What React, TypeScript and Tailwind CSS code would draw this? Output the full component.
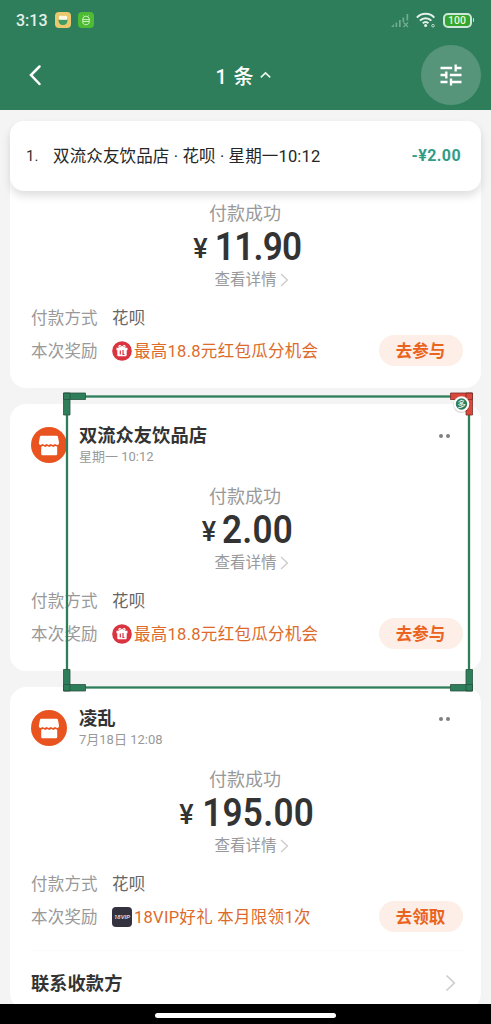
import type { ReactNode } from "react";
import clsx from "clsx";

interface Reward {
  icon: "gift" | "vip";
  text: string;
  action: string;
}

interface Payment {
  id: string;
  merchant?: string;
  time?: string;
  amount: string;
  method: string;
  reward: Reward;
}

const PAYMENTS: Payment[] = [
  {
    id: "p1",
    amount: "11.90",
    method: "花呗",
    reward: { icon: "gift", text: "最高18.8元红包瓜分机会", action: "去参与" },
  },
  {
    id: "p2",
    merchant: "双流众友饮品店",
    time: "星期一 10:12",
    amount: "2.00",
    method: "花呗",
    reward: { icon: "gift", text: "最高18.8元红包瓜分机会", action: "去参与" },
  },
  {
    id: "p3",
    merchant: "凌乱",
    time: "7月18日 12:08",
    amount: "195.00",
    method: "花呗",
    reward: { icon: "vip", text: "18VIP好礼 本月限领1次", action: "去领取" },
  },
];

function StatusBar() {
  return (
    <div className="flex h-10 items-center justify-between pl-4 pr-[17px]">
      <div className="flex items-center">
        <span className="w-[39px] pt-[2px] text-[16px] font-medium leading-5 text-[#e4f1ea]">3:13</span>
        <svg className="h-4 w-4" viewBox="0 0 16 16" aria-hidden>
          <rect width="16" height="16" rx="4" fill="#e9c96c" />
          <path d="M3.500 7.500h9c0 3.400-1.300 5.500-4.500 5.500S3.500 10.900 3.500 7.500z" fill="#3f9a63" />
          <path d="M4 4.500l1.600-.9 1.300.6L8 3.500l1.300.7 1.300-.6 1.400.9v3.300H4z" fill="#fff8ea" />
        </svg>
        <svg className="ml-[7px] h-4 w-4" viewBox="0 0 16 16" aria-hidden>
          <rect width="16" height="16" rx="4" fill="#4dbb33" />
          <g fill="none" stroke="#d5f5c8" strokeWidth="0.900">
            <path d="M4.800 7.500c0-4.400 6.400-4.400 6.400 0M5.500 3.500l.8 1.200M10.500 3.500l-.8 1.200M4 7.600h8M4.800 9.500h6.400M4.800 8v2c0 3.700 6.400 3.700 6.400 0V8" />
          </g>
        </svg>
      </div>
      <div className="flex items-center">
        <svg className="h-[15px] w-[20px]" viewBox="0 0 20 15" aria-hidden>
          <g fill="#73ab90">
            <path d="M1 14l3-3v3zM5.500 9.500h1.700V14H5.500zM9 7h1.700v7H9zM12.500 4.500h1.700V9h-1.700zM16.500 1h1.700v6.500h-1.700z" />
          </g>
          <path d="M13.500 9.500l4.500 4.500M18 9.500L13.500 14" stroke="#73ab90" strokeWidth="1.400" />
        </svg>
        <svg className="ml-[6px] h-[16px] w-[21px]" viewBox="0 0 21 16" aria-hidden>
          <g fill="none" stroke="#e4f1ea" strokeWidth="2">
            <path d="M.9 5.600c4.700-5 12.800-5 17.400 0M3.900 8.600c3.100-3.300 8.400-3.300 11.400 0M6.800 11.300c1.700-1.700 4-1.700 5.600 0" />
          </g>
          <circle cx="9.600" cy="13.500" r="1.500" fill="#e4f1ea" />
          <circle cx="17" cy="13.700" r="1.300" fill="none" stroke="#bcdccb" />
        </svg>
        <div className="ml-[6px] flex items-center">
          <div className="flex h-[15px] w-[29px] items-center justify-center rounded-[5px] border-2 border-[#cfe6da] bg-[#34a52d]">
            <span className="pt-[2px] text-[10.500px] font-medium leading-none text-[#e6f8dc]">100</span>
          </div>
          <div className="ml-px h-1 w-[1.500px] rounded-r bg-[#cfe6da]" />
        </div>
      </div>
    </div>
  );
}

function TopBar() {
  return (
    <header className="h-[110px] shrink-0 bg-[#2f7e5b]">
      <StatusBar />
      <div className="flex h-[70px] items-center justify-between pl-[28px] pr-[10px]">
        <svg className="h-6 w-[44px]" viewBox="0 0 44 24" aria-hidden>
          <path d="M11.500 3.500L3 12l8.500 9" fill="none" stroke="#fff" strokeWidth="2.500" strokeLinecap="round" />
        </svg>
        <div className="mr-[7px] flex items-center text-white">
          <span className="pt-[3px] text-[20px] font-medium leading-6 tracking-[0.900px]">1 条</span>
          <svg className="ml-[5px] h-2 w-[11px]" viewBox="0 0 11 8" aria-hidden>
            <path d="M.8 6.300l4.700-4.500 4.700 4.500" fill="none" stroke="#eaf5ef" strokeWidth="1.600" />
          </svg>
        </div>
        <button type="button" className="flex h-[60px] w-[60px] items-center justify-center rounded-full bg-[#57957a]">
          <svg className="h-[28px] w-[28px]" viewBox="0 0 24 24" fill="#fff" aria-hidden>
            <path d="M3 17v2h6v-2H3zM3 5v2h10V5H3zm10 16v-2h8v-2h-8v-2h-2v6h2zM7 9v2H3v2h4v2h2V9H7zm14 4v-2H11v2h10zm-6-4h2V7h4V5h-4V3h-2v6z" />
          </svg>
        </button>
      </div>
    </header>
  );
}

function ResultSheet() {
  return (
    <div className="absolute left-[10px] right-[10px] top-[121px] z-20 flex h-[70px] items-center rounded-[14px] bg-white pl-[16px] pr-[20px] text-[16.500px] shadow-[0_5px_9px_rgba(0,0,0,0.13)]">
      <span className="w-[27px] text-[15px] text-[#333]">1.</span>
      <span className="flex-1 whitespace-nowrap pt-[3px] tracking-[0.140px] text-[#262626]">
        双流众友饮品店 · 花呗 · 星期一10:12
      </span>
      <span className="text-[16px] font-bold tracking-[0.400px] text-[#319c88]">-¥2.00</span>
    </div>
  );
}

function ShopAvatar() {
  return (
    <svg className="mt-1 h-9 w-9 shrink-0" viewBox="0 0 36 36" aria-hidden>
      <circle cx="18" cy="18" r="18" fill="#e8531f" />
      <path
        d="M10.500 8.800h15c.8 0 1.300.4 1.500 1.200l1 5.500c.2 1.500-.7 2.500-1.700 2.500-1.100 0-1.500-.9-2.300-.9s-1.200.9-2.100.9-1.300-.9-2.100-.9-1.200.9-2.100.9-1.300-.9-2.100-.9-1.200.9-2.100.9-1.200-.9-2-.9-1.200.9-2 .9c-1 0-1.800-1-1.600-2.500l1-5.500c.2-.8.700-1.200 1.600-1.200z"
        fill="#fff"
      />
      <path
        d="M10.200 19.700c.8 0 1.300-.7 2.100-.7s1.200.9 2 .9 1.200-.9 2-.9 1.200.9 2 .9 1.200-.9 2-.9 1.200.9 2 .9 1.200-.9 2-.9 1 .7 1.900.7v7c0 1-.6 1.600-1.600 1.600H11.800c-1 0-1.600-.6-1.600-1.600z"
        fill="#fff"
      />
    </svg>
  );
}

function GiftIcon() {
  return (
    <svg className="h-5 w-5" viewBox="0 0 20 20" aria-hidden>
      <circle cx="10" cy="10" r="9.800" fill="#d93440" />
      <path d="M4.500 6.800h11v2.500h-11zM5.300 9.300h9.400v4.500c0 1-.6 1.500-1.500 1.500H6.800c-.9 0-1.500-.5-1.500-1.500z" fill="#fff" />
      <path d="M10 6.800C7.500 7 6.500 5.900 7 5s2.400-.4 3 1.800c.6-2.200 2.500-2.700 3-1.800s-.5 2-3 1.800z" fill="none" stroke="#fff" strokeWidth="1.100" />
      <path d="M8.300 9.500v4M11 9v4.500h1.500" fill="none" stroke="#d93440" strokeWidth="1.200" />
    </svg>
  );
}

function VipIcon() {
  return (
    <div className="flex h-5 w-5 items-center justify-center rounded bg-[#34323f]">
      <span className="text-[6px] font-bold italic leading-none text-[#d8d6df]">18VIP</span>
    </div>
  );
}

function Row({ label, className, children }: { label: string; className?: string; children: ReactNode }) {
  return (
    <div className={clsx("flex items-center text-[16.500px]", className)}>
      <span className="w-[81px] shrink-0 pt-[4px] tracking-[0.200px] text-[#999]">{label}</span>
      {children}
    </div>
  );
}

function PaymentBody({ payment }: { payment: Payment }) {
  const { amount, method, reward } = payment;
  return (
    <>
      <div className="flex flex-col items-center pr-[4px]">
        <p className="h-6 pt-[1.500px] text-[18px] leading-6 text-[#999]">付款成功</p>
        <p className="mt-[3px] flex h-10 items-baseline pl-[9px] leading-10 text-[#333]">
          <span className="mr-[2px] -translate-y-[2px] text-[27px] font-medium">¥</span>
          <span
            className={clsx(
              "scale-x-90 text-[39px] font-semibold",
              amount.startsWith("11") ? "tracking-[-0.800px]" : "tracking-[0.300px]",
            )}
          >
            {amount}
          </span>
        </p>
        <p className="mt-[2px] flex items-center pl-[13px] text-[15.500px] leading-5 text-[#999]">
          <span className="pt-px">查看详情</span>
          <svg className="ml-[3px] h-[14px] w-[9px]" viewBox="0 0 9 14" aria-hidden>
            <path d="M1 1l6.500 6L1 13" fill="none" stroke="#ccc" strokeWidth="1.300" />
          </svg>
        </p>
      </div>
      <Row label="付款方式" className="mt-[17px] h-5">
        <span className="pt-[4px] tracking-[0.300px] text-[#666]">{method}</span>
      </Row>
      <Row label="本次奖励" className="mt-2 h-[31px]">
        {reward.icon === "gift" ? <GiftIcon /> : <VipIcon />}
        <span className="ml-[2px] flex-1 whitespace-nowrap pt-[4px] tracking-[0.280px] text-[#dc6b2b]">
          {reward.text}
        </span>
        <button
          type="button"
          className="h-[31px] w-[84px] rounded-full bg-[#fdeee8] pr-px pt-[3px] font-bold text-[#ea6420]"
        >
          {reward.action}
        </button>
      </Row>
    </>
  );
}

function PaymentCard({ payment, footer }: { payment: Payment; footer?: ReactNode }) {
  return (
    <section
      className={clsx(
        "shrink-0 rounded-[16px] bg-white pl-[21px] pr-[18px]",
        footer ? "h-[322px]" : "h-[267px]",
        payment.merchant ? "pt-[19px]" : "pt-[79px]",
      )}
    >
      {payment.merchant && (
        <div className="mb-[18px] flex h-[42px]">
          <ShopAvatar />
          <div className="ml-[12px] flex-1 pt-px">
            <h2 className="text-[18.300px] font-bold leading-6 text-[#333]">{payment.merchant}</h2>
            <p className="text-[13px] leading-[18px] text-[#999]">{payment.time}</p>
          </div>
          <div className="mr-[13px] mt-[11px] flex h-1 gap-[3px]">
            <i className="h-1 w-1 rounded-full bg-[#808080]" />
            <i className="h-1 w-1 rounded-full bg-[#808080]" />
          </div>
        </div>
      )}
      <PaymentBody payment={payment} />
      {footer}
    </section>
  );
}

function ContactRow() {
  return (
    <div className="mt-[18px] flex h-[64px] items-center justify-between border-t border-[#fafafa] pr-[7px]">
      <span className="pt-[3px] text-[18.200px] font-bold tracking-[0.100px] text-[#333]">联系收款方</span>
      <svg className="h-[18px] w-[11px]" viewBox="0 0 11 18" aria-hidden>
        <path d="M1.500 1.500L9.300 9l-7.800 7.500" fill="none" stroke="#ccc" strokeWidth="1.600" />
      </svg>
    </div>
  );
}

/* Capture region drawn over the list, with drag handles at the corners. */
function SelectionFrame() {
  return (
    <svg className="absolute left-[60px] top-[390px] z-10 h-[305px] w-[416px]" viewBox="60 390 416 305" aria-hidden>
      <rect x="67" y="396.500" width="402" height="291" fill="none" stroke="#2f7e5b" strokeWidth="2.300" />
      <g fill="#2f7e5b" stroke="#28543f" strokeWidth="0.800">
        <path d="M63.500 393h22v6.500h-22zM63.500 393h6.500v22h-6.500z" />
        <path d="M63.500 684.500h22v6.500h-22zM63.500 669.500h6.500V691h-6.500z" />
        <path d="M450.500 684.500h22v6.500h-22zM466 669.500h6.500V691H466z" />
        <path d="M450.500 393h22v6.500h-22zM466 393h6.500v22H466z" fill="#d9483b" stroke="#7c2f28" />
      </g>
      <circle cx="461.500" cy="404.800" r="8.300" fill="#000" opacity="0.150" />
      <circle cx="461.500" cy="404" r="7.800" fill="#fff" />
      <circle cx="461.500" cy="404" r="5.700" fill="#2f7e5b" />
      <text x="461.500" y="407.200" textAnchor="middle" fontSize="8.500" fill="#fff">
        多
      </text>
    </svg>
  );
}

export default function App() {
  return (
    <div className="relative flex h-[1024px] w-[491px] flex-col overflow-hidden bg-[#f4f4f4] font-[Roboto,'Noto_Sans_CJK_SC',sans-serif]">
      <TopBar />
      <main className="flex h-[894px] flex-col gap-4 overflow-hidden px-[10px] pt-[11px]">
        {PAYMENTS.map((payment) => (
          <PaymentCard
            key={payment.id}
            payment={payment}
            footer={payment.id === "p3" ? <ContactRow /> : undefined}
          />
        ))}
      </main>
      <footer className="flex h-5 shrink-0 justify-center bg-black pt-[9px]">
        <div className="h-[5px] w-[181px] rounded-full bg-white" />
      </footer>
      <ResultSheet />
      <SelectionFrame />
    </div>
  );
}
